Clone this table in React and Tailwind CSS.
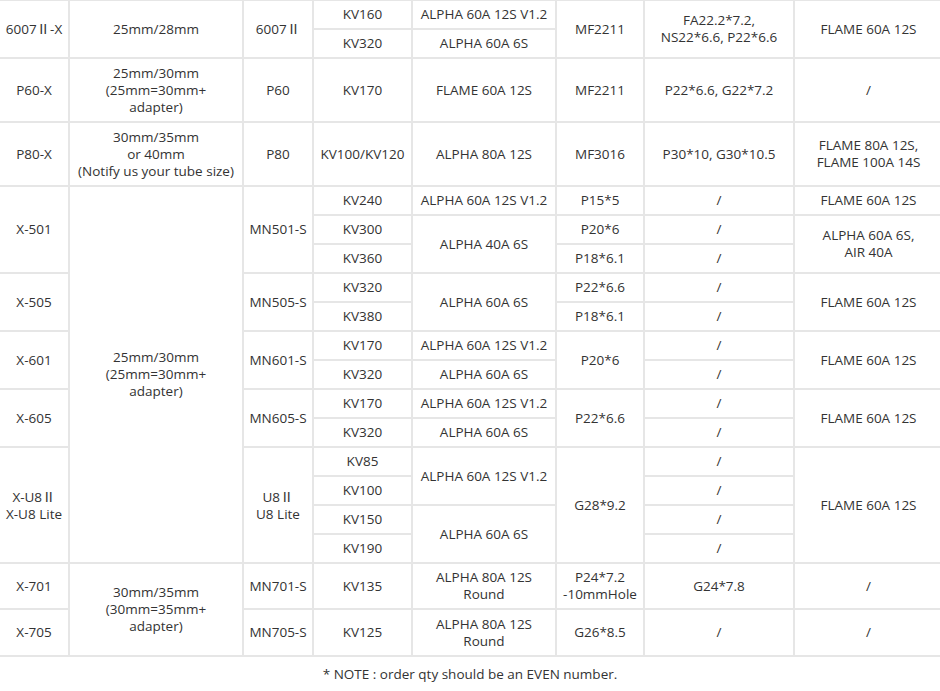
import React from "react";

const C = ({ rs, children, cls = "" }) => (
  <td rowSpan={rs} className={"border-2 border-[#e6e6e6] text-center align-middle p-0 " + cls}>
    {children}
  </td>
);

const II = () => (
  <span style={{ fontFamily: '"Noto Sans CJK SC", "Noto Sans CJK JP", sans-serif' }}>Ⅱ</span>
);

export default function App() {
  const sub = "h-[29px]";
  return (
    <div className="w-[940px] h-[691px] bg-white overflow-hidden text-[#333] text-[13.5px] leading-[17px]" style={{ fontFamily: '"Open Sans", "Noto Sans", sans-serif' }}>
      <table className="border-collapse table-fixed w-[944px] -ml-[2px] -mt-[1px]">
        <colgroup>
          <col className="w-[70px]" />
          <col className="w-[174px]" />
          <col className="w-[70px]" />
          <col className="w-[99px]" />
          <col className="w-[144px]" />
          <col className="w-[88px]" />
          <col className="w-[150px]" />
          <col className="w-[149px]" />
        </colgroup>
        <tbody>
          <tr className={sub}>
            <C rs={2}>6007<II />-X</C>
            <C rs={2}>25mm/28mm</C>
            <C rs={2}>6007<II /></C>
            <C>KV160</C>
            <C>ALPHA 60A 12S V1.2</C>
            <C rs={2}>MF2211</C>
            <C rs={2}>FA22.2*7.2,<br />NS22*6.6, P22*6.6</C>
            <C rs={2}>FLAME 60A 12S</C>
          </tr>
          <tr className={sub}>
            <C>KV320</C>
            <C>ALPHA 60A 6S</C>
          </tr>
          <tr className="h-[64px]">
            <C>P60-X</C>
            <C>25mm/30mm<br />(25mm=30mm+<br />adapter)</C>
            <C>P60</C>
            <C>KV170</C>
            <C>FLAME 60A 12S</C>
            <C>MF2211</C>
            <C>P22*6.6, G22*7.2</C>
            <C>/</C>
          </tr>
          <tr className="h-[64px]">
            <C>P80-X</C>
            <C>30mm/35mm<br />or 40mm<br />(Notify us your tube size)</C>
            <C>P80</C>
            <C>KV100/KV120</C>
            <C>ALPHA 80A 12S</C>
            <C>MF3016</C>
            <C>P30*10, G30*10.5</C>
            <C>FLAME 80A 12S,<br />FLAME 100A 14S</C>
          </tr>
          <tr className={sub}>
            <C rs={3}>X-501</C>
            <C rs={13}>25mm/30mm<br />(25mm=30mm+<br />adapter)</C>
            <C rs={3}>MN501-S</C>
            <C>KV240</C>
            <C>ALPHA 60A 12S V1.2</C>
            <C>P15*5</C>
            <C>/</C>
            <C>FLAME 60A 12S</C>
          </tr>
          <tr className={sub}>
            <C>KV300</C>
            <C rs={2}>ALPHA 40A 6S</C>
            <C>P20*6</C>
            <C>/</C>
            <C rs={2}>ALPHA 60A 6S,<br />AIR 40A</C>
          </tr>
          <tr className={sub}>
            <C>KV360</C>
            <C>P18*6.1</C>
            <C>/</C>
          </tr>
          <tr className={sub}>
            <C rs={2}>X-505</C>
            <C rs={2}>MN505-S</C>
            <C>KV320</C>
            <C rs={2}>ALPHA 60A 6S</C>
            <C>P22*6.6</C>
            <C>/</C>
            <C rs={2}>FLAME 60A 12S</C>
          </tr>
          <tr className={sub}>
            <C>KV380</C>
            <C>P18*6.1</C>
            <C>/</C>
          </tr>
          <tr className={sub}>
            <C rs={2}>X-601</C>
            <C rs={2}>MN601-S</C>
            <C>KV170</C>
            <C>ALPHA 60A 12S V1.2</C>
            <C rs={2}>P20*6</C>
            <C>/</C>
            <C rs={2}>FLAME 60A 12S</C>
          </tr>
          <tr className={sub}>
            <C>KV320</C>
            <C>ALPHA 60A 6S</C>
            <C>/</C>
          </tr>
          <tr className={sub}>
            <C rs={2}>X-605</C>
            <C rs={2}>MN605-S</C>
            <C>KV170</C>
            <C>ALPHA 60A 12S V1.2</C>
            <C rs={2}>P22*6.6</C>
            <C>/</C>
            <C rs={2}>FLAME 60A 12S</C>
          </tr>
          <tr className={sub}>
            <C>KV320</C>
            <C>ALPHA 60A 6S</C>
            <C>/</C>
          </tr>
          <tr className={sub}>
            <C rs={4}>X-U8<II /><br />X-U8 Lite</C>
            <C rs={4}>U8<II /><br />U8 Lite</C>
            <C>KV85</C>
            <C rs={2}>ALPHA 60A 12S V1.2</C>
            <C rs={4}>G28*9.2</C>
            <C>/</C>
            <C rs={4}>FLAME 60A 12S</C>
          </tr>
          <tr className={sub}>
            <C>KV100</C>
            <C>/</C>
          </tr>
          <tr className={sub}>
            <C>KV150</C>
            <C rs={2}>ALPHA 60A 6S</C>
            <C>/</C>
          </tr>
          <tr className={sub}>
            <C>KV190</C>
            <C>/</C>
          </tr>
          <tr className="h-[46px]">
            <C>X-701</C>
            <C rs={2}>30mm/35mm<br />(30mm=35mm+<br />adapter)</C>
            <C>MN701-S</C>
            <C>KV135</C>
            <C>ALPHA 80A 12S<br />Round</C>
            <C>P24*7.2<br />-10mmHole</C>
            <C>G24*7.8</C>
            <C>/</C>
          </tr>
          <tr className="h-[47px]">
            <C>X-705</C>
            <C>MN705-S</C>
            <C>KV125</C>
            <C>ALPHA 80A 12S<br />Round</C>
            <C>G26*8.5</C>
            <C>/</C>
            <C>/</C>
          </tr>
        </tbody>
      </table>
      <p className="text-center mt-[9px] text-[13.5px] leading-[17px]">* NOTE : order qty should be an EVEN number.</p>
    </div>
  );
}
